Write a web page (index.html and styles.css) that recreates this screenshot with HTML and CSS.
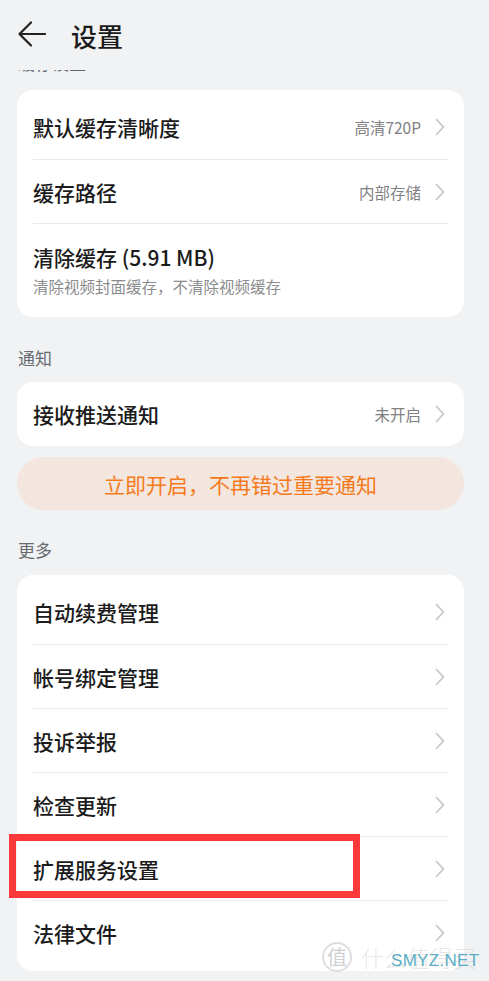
FILE: index.html
```html
<!DOCTYPE html>
<html lang="zh-CN">
<head>
<meta charset="utf-8">
<title>设置</title>
<link rel="stylesheet" href="styles.css">
</head>
<body>
<div class="page">
  <header class="header">
    <svg class="back" width="28" height="26" viewBox="0 0 28 26"><path d="M1.5 13 H27 M13 1.5 L1.5 13 L13 24.5" fill="none" stroke="#222" stroke-width="2.2" stroke-linecap="round" stroke-linejoin="round"/></svg>
    <h1 class="title">设置</h1>
  </header>
  <main class="content">
    <div class="cut"><div class="section-label">缓存设置</div></div>
    <section class="card">
      <div class="row"><span class="row-title">默认缓存清晰度</span><span class="value">高清720P</span><svg class="chev" width="10" height="18" viewBox="0 0 10 18"><path d="M1.5 1.5 L8.5 9 L1.5 16.5" fill="none" stroke="#c6c6c6" stroke-width="1.7" stroke-linecap="round" stroke-linejoin="round"/></svg></div>
      <div class="row"><span class="row-title">缓存路径</span><span class="value">内部存储</span><svg class="chev" width="10" height="18" viewBox="0 0 10 18"><path d="M1.5 1.5 L8.5 9 L1.5 16.5" fill="none" stroke="#c6c6c6" stroke-width="1.7" stroke-linecap="round" stroke-linejoin="round"/></svg></div>
      <div class="row row-tall">
        <div class="row-text">
          <span class="row-title">清除缓存 (5.91 MB)</span>
          <span class="row-sub">清除视频封面缓存，不清除视频缓存</span>
        </div>
      </div>
    </section>

    <div class="section-label label-gap">通知</div>
    <section class="card">
      <div class="row"><span class="row-title">接收推送通知</span><span class="value">未开启</span><svg class="chev" width="10" height="18" viewBox="0 0 10 18"><path d="M1.5 1.5 L8.5 9 L1.5 16.5" fill="none" stroke="#c6c6c6" stroke-width="1.7" stroke-linecap="round" stroke-linejoin="round"/></svg></div>
    </section>
    <div class="banner">立即开启，不再错过重要通知</div>

    <div class="section-label label-gap2">更多</div>
    <section class="card card-more">
      <div class="row"><span class="row-title">自动续费管理</span><svg class="chev" width="10" height="18" viewBox="0 0 10 18"><path d="M1.5 1.5 L8.5 9 L1.5 16.5" fill="none" stroke="#c6c6c6" stroke-width="1.7" stroke-linecap="round" stroke-linejoin="round"/></svg></div>
      <div class="row"><span class="row-title">帐号绑定管理</span><svg class="chev" width="10" height="18" viewBox="0 0 10 18"><path d="M1.5 1.5 L8.5 9 L1.5 16.5" fill="none" stroke="#c6c6c6" stroke-width="1.7" stroke-linecap="round" stroke-linejoin="round"/></svg></div>
      <div class="row"><span class="row-title">投诉举报</span><svg class="chev" width="10" height="18" viewBox="0 0 10 18"><path d="M1.5 1.5 L8.5 9 L1.5 16.5" fill="none" stroke="#c6c6c6" stroke-width="1.7" stroke-linecap="round" stroke-linejoin="round"/></svg></div>
      <div class="row"><span class="row-title">检查更新</span><svg class="chev" width="10" height="18" viewBox="0 0 10 18"><path d="M1.5 1.5 L8.5 9 L1.5 16.5" fill="none" stroke="#c6c6c6" stroke-width="1.7" stroke-linecap="round" stroke-linejoin="round"/></svg></div>
      <div class="row row-marked"><span class="row-title">扩展服务设置</span><svg class="chev" width="10" height="18" viewBox="0 0 10 18"><path d="M1.5 1.5 L8.5 9 L1.5 16.5" fill="none" stroke="#c6c6c6" stroke-width="1.7" stroke-linecap="round" stroke-linejoin="round"/></svg><span class="highlight"></span></div>
      <div class="row"><span class="row-title">法律文件</span><svg class="chev" width="10" height="18" viewBox="0 0 10 18"><path d="M1.5 1.5 L8.5 9 L1.5 16.5" fill="none" stroke="#c6c6c6" stroke-width="1.7" stroke-linecap="round" stroke-linejoin="round"/></svg></div>
    </section>
  </main>
  <div class="watermark">
    <span class="wm-badge">值</span>
    <span class="wm-text">什么值得买</span>
    <span class="wm-site">SMYZ.NET</span>
  </div>
</div>
</body>
</html>
```

FILE: styles.css
```css
* { box-sizing: border-box; }
html, body { margin: 0; padding: 0; }
body {
  background: #f1f2f4;
  font-family: "Noto Sans CJK SC", "Noto Sans", sans-serif;
  color: #1b1b1b;
}
.page {
  position: relative;
  width: 489px;
  height: 981px;
  overflow: hidden;
}
.header {
  height: 70px;
  display: flex;
  align-items: center;
  padding-left: 18px;
  gap: 25px;
}
.back { display: block; margin-top: -2px; }
.title {
  margin: 0;
  font-size: 26px;
  font-weight: 500;
  line-height: 34px;
  color: #1a1a1a;
  margin-top: 2px;
}
.content {
  padding: 0 25px 0 17px;
}
.cut {
  height: 20px;
  overflow: hidden;
}
.cut .section-label { margin-top: -19px; }
.section-label {
  font-size: 17px;
  line-height: 24px;
  color: #666a70;
  padding-left: 1px;
}
.label-gap { margin-top: 29px; margin-bottom: 12px; }
.label-gap2 { margin-top: 28px; margin-bottom: 13px; }
.card {
  background: #fff;
  border-radius: 16px;
  padding: 5px 0;
}
.card-more { padding-bottom: 7px; }
.row {
  position: relative;
  height: 64px;
  margin: 0 16px;
  display: flex;
  align-items: center;
}
.row + .row { border-top: 1px solid #e9e9eb; }
.card > .row:only-child { height: 54px; }
.row-tall { height: 89px; align-items: flex-start; padding-top: 19px; }
.row-title {
  font-size: 21px;
  line-height: 28px;
  font-weight: 500;
  color: #1b1b1b;
  flex: 1;
}
.row-text { display: flex; flex-direction: column; gap: 5px; }
.row-sub {
  font-size: 15.5px;
  line-height: 20px;
  color: #8c8c8e;
}
.value {
  font-size: 15.5px;
  color: #808082;
  margin-right: 14px;
}
.chev { display: block; margin-right: 3px; }
.banner {
  margin-top: 11px;
  height: 53px;
  border-radius: 27px;
  background: #f3e6df;
  color: #f57a1c;
  font-size: 21px;
  display: flex;
  align-items: center;
  justify-content: center;
}
.highlight {
  position: absolute;
  left: -24px;
  top: -3px;
  width: 351px;
  height: 64px;
  border: 7px solid #fb393b;
}
.watermark {
  position: absolute;
  left: 322px;
  top: 941px;
  width: 160px;
  height: 32px;
  display: flex;
  align-items: center;
  gap: 9px;
  pointer-events: none;
}
.wm-badge {
  width: 30px;
  height: 30px;
  border: 2px solid rgba(200,200,200,0.6);
  border-radius: 50%;
  color: rgba(190,190,190,0.75);
  font-size: 20px;
  line-height: 26px;
  text-align: center;
}
.wm-text {
  font-size: 23px;
  color: rgba(200,200,200,0.45);
  font-weight: 300;
  letter-spacing: 0;
}
.wm-site {
  position: absolute;
  left: 69px;
  top: 10px;
  font-family: "Liberation Sans", sans-serif;
  font-size: 17px;
  color: #5aaec4;
  letter-spacing: 0.3px;
}
```
